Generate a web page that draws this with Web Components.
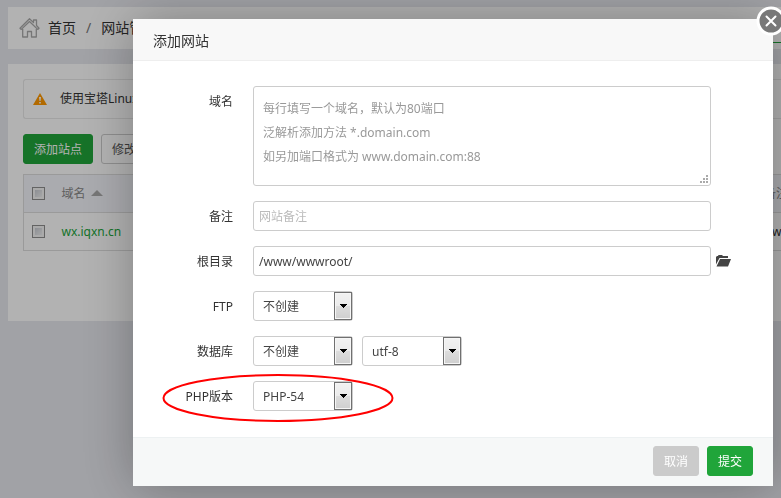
<!DOCTYPE html>
<html lang="zh-CN">
<head>
<meta charset="utf-8">
<title>添加网站</title>
<style>
    body {
        margin: 0;
        background: #e7e8ee;
        color: #333;
        font: 12px/20px "Noto Sans", "Noto Sans CJK SC", sans-serif;
        overflow: hidden;
    }
</style>
</head>
<body>
<bt-page></bt-page>
<bt-dialog heading="添加网站">
    <bt-row label="域名"><bt-textarea></bt-textarea></bt-row>
    <bt-row label="备注"><bt-input label="备注" placeholder="网站备注"></bt-input></bt-row>
    <bt-row label="根目录"><bt-input label="根目录" value="/www/wwwroot/"></bt-input><bt-folder slot="after"></bt-folder></bt-row>
    <bt-row label="FTP"><bt-select label="FTP" options="不创建,创建"></bt-select></bt-row>
    <bt-row label="数据库">
        <bt-select label="数据库" options="不创建,MySQL"></bt-select>
        <bt-select label="编码" options="utf-8,gbk,big5"></bt-select>
    </bt-row>
    <bt-row label="PHP版本" marked><bt-select label="PHP版本" options="PHP-54,PHP-55,PHP-56"></bt-select></bt-row>
    <bt-button slot="footer" kind="muted">取消</bt-button>
    <bt-button slot="footer" kind="primary">提交</bt-button>
</bt-dialog>

<script>
class BtButton extends HTMLElement {
    constructor() {
        super();
        this.attachShadow({ mode: 'open' });
    }

    connectedCallback() {
        this.shadowRoot.innerHTML = `
            <style>
                :host { display: block; }
                button {
                    display: block;
                    height: 30px;
                    padding: 1px 10px 0;
                    border: 1px solid #ccc;
                    border-radius: 3px;
                    background: #fff;
                    color: #555;
                    font: inherit;
                    white-space: nowrap;
                }
                :host([kind="primary"]) button { background: #20a53a; border-color: #20a53a; color: #fff; }
                :host([kind="muted"]) button { background: #cbcbcb; border-color: #cbcbcb; color: #fff; }
            </style>
            <button type="button"><slot></slot></button>
        `;
    }
}

class BtInput extends HTMLElement {
    constructor() {
        super();
        this.attachShadow({ mode: 'open' });
    }

    connectedCallback() {
        const label = this.getAttribute('label') || '';
        const value = this.getAttribute('value') || '';
        const placeholder = this.getAttribute('placeholder') || '';

        this.shadowRoot.innerHTML = `
            <style>
                :host { display: block; flex: 1; }
                input {
                    display: block;
                    box-sizing: border-box;
                    width: 100%;
                    height: 30px;
                    padding: 0 5px;
                    border: 1px solid #ccc;
                    border-radius: 3px;
                    background: #fff;
                    color: #444;
                    font: inherit;
                }
                input::placeholder { color: #bbb; }
            </style>
            <input type="text" aria-label="${label}" value="${value}" placeholder="${placeholder}">
        `;
    }
}

class BtTextarea extends HTMLElement {
    constructor() {
        super();
        this.attachShadow({ mode: 'open' });
    }

    connectedCallback() {
        this.shadowRoot.innerHTML = `
            <style>
                :host { display: grid; flex: 1; }
                textarea, svg { grid-area: 1 / 1; }
                textarea {
                    display: block;
                    box-sizing: border-box;
                    width: 100%;
                    height: 100px;
                    padding: 10px 9px;
                    border: 1px solid #ccc;
                    border-radius: 3px;
                    background: #fff;
                    font: inherit;
                    line-height: 24px;
                    resize: none;
                }
                textarea::placeholder { color: #999; }
                svg { place-self: end; margin: 3px; pointer-events: none; }
            </style>
            <textarea aria-label="域名" placeholder="每行填写一个域名，默认为80端口&#10;泛解析添加方法 *.domain.com&#10;如另加端口格式为 www.domain.com:88"></textarea>
            <svg width="8" height="8" viewBox="0 0 8 8" fill="#aaa" shape-rendering="crispEdges">
                <path d="M6 0h2v2h-2zM6 3h2v2h-2zM3 3h2v2h-2zM6 6h2v2h-2zM3 6h2v2h-2zM0 6h2v2h-2z"/>
            </svg>
        `;
    }
}

class BtSelect extends HTMLElement {
    constructor() {
        super();
        this.attachShadow({ mode: 'open' });
    }

    connectedCallback() {
        const options = (this.getAttribute('options') || '').split(',');

        this.shadowRoot.innerHTML = `
            <style>
                :host { display: grid; width: 100px; }
                select, .arrow { grid-area: 1 / 1; }
                select {
                    appearance: none;
                    width: 100%;
                    height: 30px;
                    padding: 2px 20px 0 9px;
                    border: 1px solid #ccc;
                    border-radius: 3px;
                    background: #fff;
                    color: #444;
                    font: inherit;
                }
                .arrow {
                    justify-self: end;
                    display: flex;
                    align-items: center;
                    justify-content: center;
                    box-sizing: border-box;
                    width: 18px;
                    margin: 1px;
                    border: 1px solid #707070;
                    background: linear-gradient(#f2f2f2, #ebebeb 50%, #dddddd 50%, #cfcfcf);
                    box-shadow: inset 0 0 0 1px #f6f6f6;
                    pointer-events: none;
                }
            </style>
            <select aria-label="${this.getAttribute('label')}">
                ${options.map(o => `<option>${o}</option>`).join('')}
            </select>
            <span class="arrow">
                <svg width="7" height="4" viewBox="0 0 7 4" shape-rendering="crispEdges"><path d="M0 0h7v1h-1v1h-1v1h-1v1h-1v-1h-1v-1h-1v-1h-1z"/></svg>
            </span>
        `;
    }
}

class BtFolder extends HTMLElement {
    constructor() {
        super();
        this.attachShadow({ mode: 'open' });
    }

    connectedCallback() {
        this.shadowRoot.innerHTML = `
            <style>
                :host { display: block; }
                button { display: block; padding: 0; border: 0; background: none; }
                svg { display: block; }
            </style>
            <button type="button" aria-label="选择目录">
                <svg width="15" height="12" viewBox="0 0 15 12" fill="#444">
                    <path d="M0 9.500V2L1 1h1l.5-1H6l1 1h5v2H3.500z"/>
                    <path d="M4 4H15L12 11.500H.5z"/>
                </svg>
            </button>
        `;
    }
}

class BtRow extends HTMLElement {
    constructor() {
        super();
        this.attachShadow({ mode: 'open' });
    }

    connectedCallback() {
        // red ring drawn round the row that needs attention
        const ring = this.hasAttribute('marked')
            ? '<svg class="ring" width="232" height="50" viewBox="0 0 232 50"><ellipse cx="116" cy="25" rx="114.500" ry="23" fill="none" stroke="#f00" stroke-width="2"/></svg>'
            : '';

        this.shadowRoot.innerHTML = `
            <style>
                :host { display: flex; position: relative; }
                .label {
                    flex: none;
                    box-sizing: border-box;
                    width: 120px;
                    height: 30px;
                    padding-right: 20px;
                    line-height: 32px;
                    text-align: right;
                }
                .field { display: flex; flex: 1; gap: 9px; }
                .after {
                    display: flex;
                    align-items: center;
                    box-sizing: border-box;
                    width: 62px;
                    padding-left: 5px;
                }
                .ring { position: absolute; left: 29px; top: -8px; pointer-events: none; }
            </style>
            <span class="label">${this.getAttribute('label')}</span>
            <div class="field"><slot></slot></div>
            <div class="after"><slot name="after"></slot></div>
            ${ring}
        `;
    }
}

class BtDialog extends HTMLElement {
    constructor() {
        super();
        this.attachShadow({ mode: 'open' });
    }

    connectedCallback() {
        this.shadowRoot.innerHTML = `
            <style>
                :host {
                    display: block;
                    position: fixed;
                    inset: 0;
                    padding: 19px 8px 12px 133px;
                    background: rgba(0, 0, 0, .3);
                }
                .box {
                    position: relative;
                    background: #fff;
                    box-shadow: 1px 1px 50px rgba(0, 0, 0, .3);
                }
                h2 {
                    margin: 0;
                    padding: 2px 20px 0;
                    border-bottom: 1px solid #eee;
                    background: #f8f8f8;
                    font-size: 14px;
                    font-weight: 400;
                    line-height: 39px;
                }
                .rows { display: flex; flex-direction: column; gap: 15px; padding: 25px 0 26px; }
                footer {
                    display: flex;
                    justify-content: flex-end;
                    gap: 8px;
                    padding: 8px 20px 10px;
                    border-top: 1px solid #edf1f2;
                    background: #f6f8f8;
                }
                .close {
                    position: absolute;
                    top: -13px;
                    right: -13px;
                    padding: 0;
                    border: 0;
                    background: none;
                }
                .close svg { display: block; }
            </style>
            <section class="box" role="dialog" aria-label="${this.getAttribute('heading')}">
                <h2>${this.getAttribute('heading')}</h2>
                <div class="rows"><slot></slot></div>
                <footer><slot name="footer"></slot></footer>
                <button class="close" type="button" aria-label="关闭">
                    <svg width="30" height="30" viewBox="0 0 30 30">
                        <circle cx="15" cy="15" r="13" fill="#787878" stroke="#fff" stroke-width="3"/>
                        <path d="M10.500 10.500l9 9M19.500 10.500l-9 9" stroke="#fff" stroke-width="2" stroke-linecap="round"/>
                    </svg>
                </button>
            </section>
        `;
    }
}

class BtPage extends HTMLElement {
    constructor() {
        super();
        this.attachShadow({ mode: 'open' });
    }

    connectedCallback() {
        this.shadowRoot.innerHTML = `
            <style>
                :host { display: flex; flex-direction: column; gap: 15px; padding: 7px 0 0 8px; }
                a { color: inherit; text-decoration: none; }
                nav {
                    display: flex;
                    align-items: center;
                    gap: 10px;
                    height: 42px;
                    padding-left: 11px;
                    background: #fff;
                    font-size: 14px;
                    line-height: 22px;
                }
                nav .sep { color: #777; }
                nav svg { margin-right: -2px; }
                .search {
                    align-self: flex-start;
                    width: 60px;
                    height: 35px;
                    margin-left: auto;
                    border-bottom: 1px solid #20a53a;
                }
                main { padding: 15px 0 70px 15px; background: #fff; }
                .tip {
                    display: flex;
                    align-items: center;
                    gap: 13px;
                    height: 38px;
                    padding-left: 9px;
                    border: 1px solid #e8e8e8;
                    border-right: 0;
                    border-radius: 3px 0 0 3px;
                    line-height: 22px;
                }
                .tools { display: flex; gap: 8px; padding: 15px 0 10px; }
                table {
                    width: 100%;
                    border: 1px solid #ddd;
                    border-right: 0;
                    border-collapse: collapse;
                    table-layout: fixed;
                }
                th, td {
                    box-sizing: border-box;
                    height: 38px;
                    padding: 0;
                    border-bottom: 1px solid #ddd;
                    font-weight: 400;
                    text-align: left;
                }
                th { background: #f4f5fb; color: #888; }
                th svg { margin-left: 2px; }
                .tick { width: 38px; padding-left: 8px; }
                .note { width: 17px; white-space: nowrap; }
                td.note { padding-left: 8px; }
                td a { color: #20a53a; }
                input {
                    appearance: none;
                    display: block;
                    box-sizing: border-box;
                    width: 13px;
                    height: 13px;
                    margin: 0;
                    border: 1px solid #8e8f8f;
                    background: linear-gradient(135deg, #c0c4cc, #f8f8f8);
                    box-shadow: inset 0 0 0 2px #f4f4f4;
                }
            </style>
            <nav>
                <svg width="21" height="20" viewBox="0 0 21 20" fill="none" stroke="#aaa" stroke-width="1.300" stroke-linejoin="round">
                    <path d="M1 10.200L10.500 .8l4 3.800V2h3v5.500L20 10.200l-1.300 1.200L10.500 3.500L2.300 11.400z"/>
                    <path d="M3.700 11v8h4.800v-5.500h4V19h4.800v-8"/>
                </svg>
                <a href="#">首页</a><span class="sep">/</span><a href="#">网站管理</a>
                <span class="search"></span>
            </nav>
            <main>
                <div class="tip">
                    <svg width="14" height="12" viewBox="0 0 14 12"><path d="M7 0L14 12H0z" fill="#f90"/><path d="M6 4h2l-.5 4h-1zM6.200 9h1.600v1.500H6.200z" fill="#fff"/></svg>
                    <span>使用宝塔Linux面板</span>
                </div>
                <div class="tools">
                    <bt-button kind="primary">添加站点</bt-button>
                    <bt-button>修改默认页</bt-button>
                </div>
                <table>
                    <tr>
                        <th class="tick"><input type="checkbox" aria-label="全选"></th>
                        <th>域名 <svg width="12" height="8" viewBox="0 0 12 8"><path d="M6 0l6 6H0z" fill="#aaa"/></svg></th>
                        <th class="note">备注</th>
                    </tr>
                    <tr>
                        <td class="tick"><input type="checkbox" aria-label="wx.iqxn.cn"></td>
                        <td><a href="#">wx.iqxn.cn</a></td>
                        <td class="note">wx.iqxn.cn</td>
                    </tr>
                </table>
            </main>
        `;
    }
}

customElements.define('bt-button', BtButton);
customElements.define('bt-input', BtInput);
customElements.define('bt-textarea', BtTextarea);
customElements.define('bt-select', BtSelect);
customElements.define('bt-folder', BtFolder);
customElements.define('bt-row', BtRow);
customElements.define('bt-dialog', BtDialog);
customElements.define('bt-page', BtPage);
</script>
</body>
</html>
